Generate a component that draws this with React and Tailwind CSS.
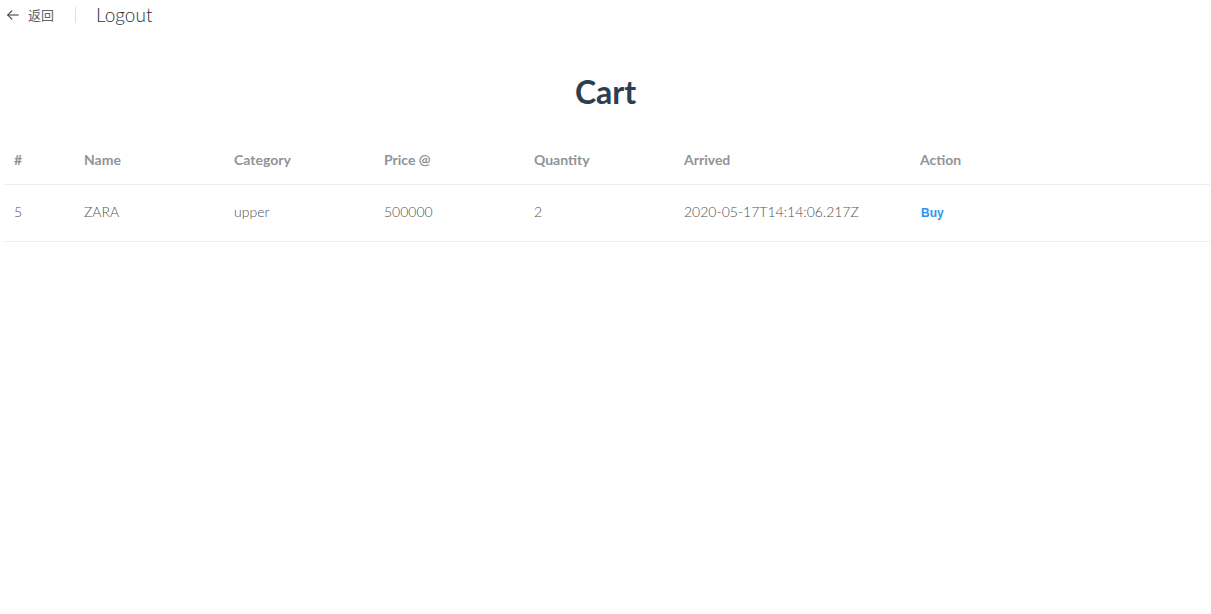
import React from 'react';

const rows = [
    { id: 5, name: 'ZARA', category: 'upper', price: 500000, quantity: 2, arrived: '2020-05-17T14:14:06.217Z' },
];

const cols = [
    { key: 'id', label: '#', w: 'w-[70px]' },
    { key: 'name', label: 'Name', w: 'w-[150px]' },
    { key: 'category', label: 'Category', w: 'w-[150px]' },
    { key: 'price', label: 'Price @', w: 'w-[150px]' },
    { key: 'quantity', label: 'Quantity', w: 'w-[150px]' },
    { key: 'arrived', label: 'Arrived', w: 'w-[236px]' },
];

const App = () => (
    <div className="min-h-[614px] bg-white font-['Lato','Noto_Sans_CJK_SC',sans-serif]">
        <div className="flex items-center h-[30px] pl-[6px]">
            <div className="flex items-center text-[#606266] cursor-pointer">
                <svg width="14" height="14" viewBox="0 0 24 24" fill="none" stroke="#303133" strokeWidth="1.8" strokeLinecap="round" strokeLinejoin="round" className="mr-[8px]">
                    <path d="M21 12H3" />
                    <path d="M10 5l-7 7 7 7" />
                </svg>
                <span className="text-[13px] font-['Noto_Sans_CJK_SC',sans-serif]">返回</span>
            </div>
            <div className="w-px h-[16px] bg-[#dcdfe6] ml-[21px] mr-[20px]" />
            <div className="text-[19px] font-light text-[#303133]">Logout</div>
        </div>

        <h1 className="text-center text-[32px] font-bold text-[#2c3e50] mt-[42px] mb-[24px] leading-[40px]">Cart</h1>

        <div className="pl-[4px] pr-[1px]">
            <table className="w-full text-left text-[14px] border-collapse">
                <thead>
                    <tr className="border-b border-[#ebeef5] h-[48px]">
                        {cols.map(c => (
                            <th key={c.key} className={`${c.w} pl-[10px] font-bold text-[#909399] text-[14px]`}>{c.label}</th>
                        ))}
                        <th className="pl-[10px] font-bold text-[#909399] text-[14px]">Action</th>
                    </tr>
                </thead>
                <tbody>
                    {rows.map(r => (
                        <tr key={r.id} className="border-b border-[#ebeef5] h-[57px] hover:bg-[#f5f7fa]">
                            {cols.map(c => (
                                <td key={c.key} className="pl-[10px] pb-[2px] text-[#4f5156] font-light text-[14px]">{r[c.key]}</td>
                            ))}
                            <td className="pl-[10px] pb-[2px]">
                                <button className="ml-px text-[12px] font-bold text-[#2a94f4] font-['Liberation_Sans',sans-serif]">Buy</button>
                            </td>
                        </tr>
                    ))}
                </tbody>
            </table>
        </div>
    </div>
);

export default App;
